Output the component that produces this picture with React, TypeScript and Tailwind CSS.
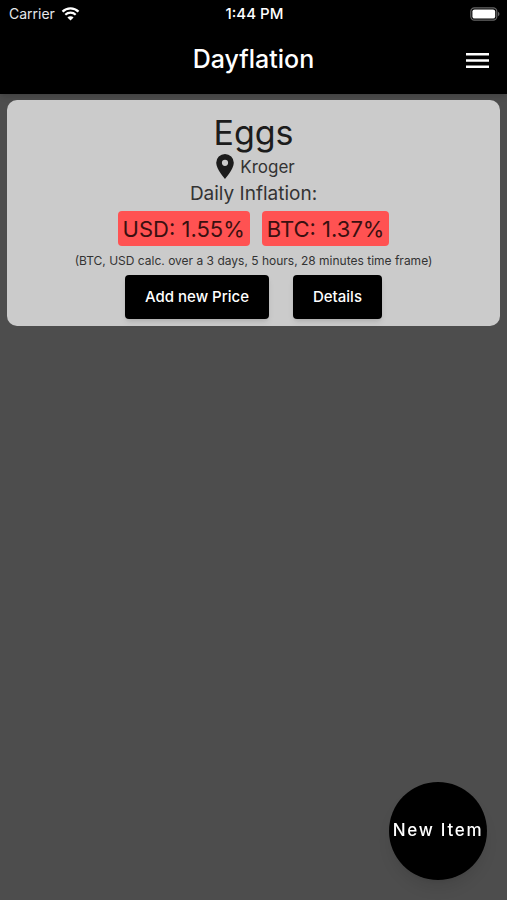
import { useState } from "react";

interface Item {
  name: string;
  store: string;
  usd: number;
  btc: number;
  timeFrame: string;
}

const startItems: Item[] = [
  {
    name: "Eggs",
    store: "Kroger",
    usd: 1.55,
    btc: 1.37,
    timeFrame: "3 days, 5 hours, 28 minutes",
  },
];

function StatusBar() {
  return (
    <div className="grid grid-cols-3 items-center h-7 pl-[9px] pr-[7px] text-sm leading-5">
      <div className="flex items-center gap-[6px] text-gray-200">
        <span>Carrier</span>
        <svg width="19" height="14" viewBox="0 0 18 14" fill="none">
          <path d="M1 4.6a11.6 11.6 0 0 1 16 0" stroke="white" strokeWidth="2.3" />
          <path d="M3.8 7.8a7.5 7.5 0 0 1 10.4 0" stroke="white" strokeWidth="2.2" />
          <path d="M9 13.6 5.9 10.5a4.4 4.4 0 0 1 6.2 0Z" fill="white" />
        </svg>
      </div>
      <span className="text-center text-[15px] font-medium">1:44 PM</span>
      <svg className="justify-self-end" width="30" height="14" viewBox="0 0 30 14">
        <rect x="0.8" y="0.8" width="26" height="12.4" rx="3.6" fill="none" stroke="#666666" strokeWidth="1.2" />
        <rect x="2.4" y="2.4" width="22.8" height="9.2" rx="2.2" fill="white" />
        <path d="M28 4.8c2 .8 2 3.6 0 4.4Z" fill="#666666" />
      </svg>
    </div>
  );
}

function Rate(props: { label: string; value: number }) {
  return (
    <span className="rounded bg-[#ff5252] px-[5px] h-[35px] text-[22px] leading-[36px] text-[#3a1010]">
      {props.label}: {props.value.toFixed(2)}%
    </span>
  );
}

function ItemCard({ item }: { item: Item }) {
  return (
    <div className="flex flex-col items-center rounded-[10px] bg-[#cbcbcb] pt-[13px] pb-[7px] text-[#333333]">
      <h2 className="text-[34px] leading-10 text-[#1c1c1c]">{item.name}</h2>
      <div className="flex items-center gap-[6px] h-[27px] pl-1">
        <svg width="18" height="25" viewBox="0 0 18 25" fill="#1c1c1c">
          <path
            fillRule="evenodd"
            d="M9 0a8.8 8.8 0 0 0-8.8 8.8C.2 15.3 9 25 9 25s8.8-9.7 8.8-16.2A8.8 8.8 0 0 0 9 0Zm0 5.7a3.1 3.1 0 1 1 0 6.2 3.1 3.1 0 0 1 0-6.2Z"
          />
        </svg>
        <span className="text-[17px] leading-6">{item.store}</span>
      </div>
      <p className="text-[19px] leading-[27px]">Daily Inflation:</p>
      <div className="flex gap-3 mt-1">
        <Rate label="USD" value={item.usd} />
        <Rate label="BTC" value={item.btc} />
      </div>
      <p className="mt-[5px] text-xs leading-5">
        (BTC, USD calc. over a {item.timeFrame} time frame)
      </p>
      <div className="flex gap-6 mt-1 text-[15px] font-medium text-white">
        <button className="h-11 px-5 rounded bg-black shadow-md">
          Add new Price
        </button>
        <button className="h-11 px-5 rounded bg-black shadow-md">
          Details
        </button>
      </div>
    </div>
  );
}

export default function App() {
  const [items] = useState<Item[]>(startItems);

  const renderedItems = items.map((item) => (
    <ItemCard key={item.name} item={item} />
  ));

  return (
    <div className="flex flex-col min-h-screen bg-[#4d4d4d] font-['Inter',sans-serif]">
      <header className="bg-black pb-[2px] text-white shadow-md">
        <StatusBar />
        <div className="grid grid-cols-[1fr_auto_1fr] items-center h-16 px-[17px]">
          <h1 className="col-start-2 text-[25px] font-medium">Dayflation</h1>
          <button aria-label="Menu" className="justify-self-end">
            <svg width="25" height="17" viewBox="0 0 25 17" fill="white">
              <path d="M1 1h23v2.5H1ZM1 7.2h23v2.5H1ZM1 13.4h23v2.5H1Z" />
            </svg>
          </button>
        </div>
      </header>
      <main className="flex flex-col gap-3 px-[7px] py-[6px]">
        {renderedItems}
      </main>
      <button className="fixed bottom-5 right-5 size-[98px] rounded-full bg-black text-[17px] font-medium tracking-widest whitespace-nowrap text-white shadow-lg">
        New Item
      </button>
    </div>
  );
}
